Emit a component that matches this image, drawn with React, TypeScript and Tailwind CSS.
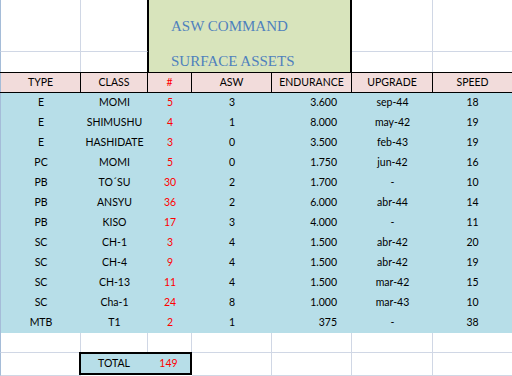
import React from "react";

const rows: [string, string, string, string, string, string, string][] = [
  ["E", "MOMI", "5", "3", "3.600", "sep-44", "18"],
  ["E", "SHIMUSHU", "4", "1", "8.000", "may-42", "19"],
  ["E", "HASHIDATE", "3", "0", "3.500", "feb-43", "19"],
  ["PC", "MOMI", "5", "0", "1.750", "jun-42", "16"],
  ["PB", "TO´SU", "30", "2", "1.700", "-", "10"],
  ["PB", "ANSYU", "36", "2", "6.000", "abr-44", "14"],
  ["PB", "KISO", "17", "3", "4.000", "-", "11"],
  ["SC", "CH-1", "3", "4", "1.500", "abr-42", "20"],
  ["SC", "CH-4", "9", "4", "1.500", "abr-42", "19"],
  ["SC", "CH-13", "11", "4", "1.500", "mar-42", "15"],
  ["SC", "Cha-1", "24", "8", "1.000", "mar-43", "10"],
  ["MTB", "T1", "2", "1", "375", "-", "38"],
];

const cols = "grid grid-cols-[81px_67px_44px_80px_80px_81px_79px]";
const headers = ["TYPE", "CLASS", "#", "ASW", "ENDURANCE", "UPGRADE", "SPEED"];

export default function App() {
  return (
    <div
      className="w-[512px] h-[376px] bg-white overflow-hidden text-[10.5px] text-black"
      style={{ fontFamily: "Lato, 'Liberation Sans', sans-serif" }}
    >
      {/* Top area */}
      <div className={`${cols} grid-rows-[52px_20px]`}>
        <div className="border-l border-l-[#a5bcd8] border-r border-b border-[#d0d7e5]" />
        <div className="border-b border-b-[#d0d7e5] border-r border-r-black" />
        <div className="col-span-3 row-span-2 bg-[#d8e4bc] border-l border-r-2 border-black pl-[22px] pt-[19px]">
          <div
            className="text-[15px] leading-[15px] text-[#4f81bd]"
            style={{ fontFamily: "'Liberation Serif', 'DejaVu Serif', serif" }}
          >
            ASW COMMAND
          </div>
          <div
            className="text-[15px] leading-[15px] text-[#4f81bd] mt-[20px]"
            style={{ fontFamily: "'Liberation Serif', 'DejaVu Serif', serif" }}
          >
            SURFACE ASSETS
          </div>
        </div>
        <div className="border-r border-b border-[#d0d7e5]" />
        <div className="border-b border-[#d0d7e5]" />
        <div className="border-l border-l-[#a5bcd8] border-r border-[#d0d7e5]" />
        <div className="border-r border-r-black" />
        <div className="border-r border-[#d0d7e5]" />
        <div />
      </div>

      {/* Header */}
      <div className={`${cols} h-[21px] bg-[#f2dcdb] border-y border-black`}>
        {headers.map((h, i) => (
          <div
            key={h}
            className={`flex items-center justify-center ${i < 6 ? "border-r border-black" : ""} ${
              i === 0 ? "border-l border-l-[#a5bcd8]" : ""
            } ${i === 2 ? "text-[#ff0000]" : ""}`}
          >
            {h}
          </div>
        ))}
      </div>

      {/* Data */}
      <div className="bg-[#b7dee8]">
        {rows.map((r, ri) => (
          <div key={ri} className={`${cols} h-[20px]`}>
            <div className="flex items-center justify-center border-l border-l-[#a5bcd8]">{r[0]}</div>
            <div className="flex items-center justify-center">{r[1]}</div>
            <div className="flex items-center justify-center text-[#ff0000]">{r[2]}</div>
            <div className="flex items-center justify-center">{r[3]}</div>
            <div className="flex items-center justify-end pr-[15px]">{r[4]}</div>
            <div className="flex items-center justify-center">{r[5]}</div>
            <div className="flex items-center justify-center">{r[6]}</div>
          </div>
        ))}
      </div>

      {/* Blank row */}
      <div className={`${cols} h-[20px]`}>
        {headers.map((h, i) => (
          <div
            key={h}
            className={`border-b border-[#d0d7e5] ${i < 6 ? "border-r" : ""} ${
              i === 0 ? "border-l border-l-[#a5bcd8]" : ""
            }`}
          />
        ))}
      </div>

      {/* Total row */}
      <div className={`${cols} h-[23px]`}>
        <div className="border-l border-l-[#a5bcd8] border-b border-b-[#d0d7e5]" />
        <div className="col-span-2 -ml-[2px] -mt-px h-[23px] border-2 border-black bg-[#b7dee8] flex">
          <div className="w-[66px] flex items-center justify-center">TOTAL</div>
          <div className="flex-1 flex items-center justify-center text-[#ff0000]">149</div>
        </div>
        <div className="border-r border-b border-[#d0d7e5]" />
        <div className="border-r border-b border-[#d0d7e5]" />
        <div className="border-r border-b border-[#d0d7e5]" />
        <div className="border-b border-[#d0d7e5]" />
      </div>
    </div>
  );
}
